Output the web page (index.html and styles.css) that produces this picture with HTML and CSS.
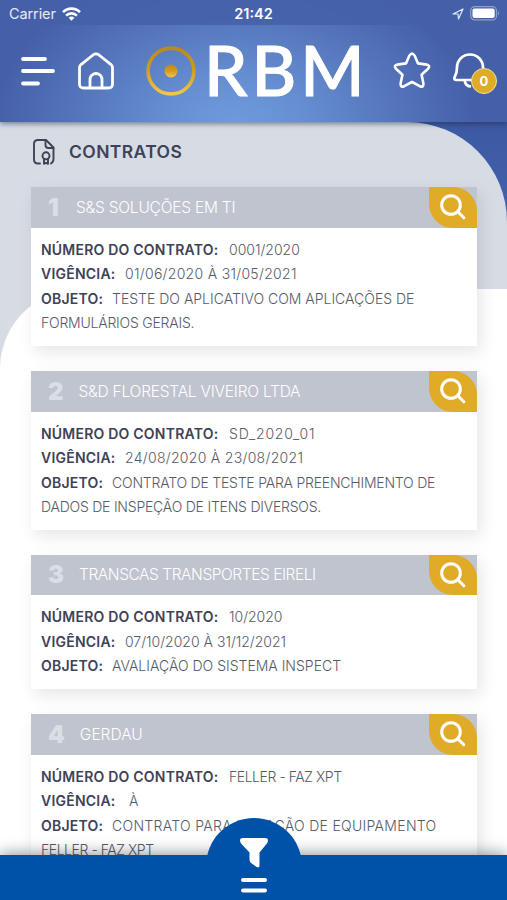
FILE: index.html
```html
<!doctype html>
<html lang="pt-BR">

<head>
    <meta charset="utf-8">
    <meta name="viewport" content="width=device-width, initial-scale=1">
    <title>Contratos</title>
    <link rel="stylesheet" href="styles.css">
</head>

<body>
<div class="app">
    <header class="header">
        <div class="status">
            <div class="carrier">
                <span>Carrier</span>
                <svg width="19" height="14" viewBox="0 0 19 14" fill="none" stroke="#fff" stroke-width="2.6">
                    <path d="M1 5.200a12 12 0 0 1 17 0M4.100 8.600a7.600 7.600 0 0 1 10.800 0"/>
                    <path d="M6.600 10.800a4.200 4.200 0 0 1 5.800 0l-2.900 3z" fill="#fff" stroke="none"/>
                </svg>
            </div>
            <div class="clock">21:42</div>
            <div class="battery">
                <svg width="12" height="12" viewBox="0 0 12 12" fill="none" stroke="#e3e8f5" stroke-width="1.200" stroke-linejoin="round">
                    <path d="M1 6l10-5-4.500 10-.5-5z"/>
                </svg>
                <svg width="30" height="15" viewBox="0 0 30 15">
                    <rect x=".7" y=".7" width="25.800" height="13.200" rx="4" fill="none" stroke="#8fa0ce" stroke-width="1.200"/>
                    <rect x="2.500" y="2.500" width="22.200" height="9.600" rx="2" fill="#fff"/>
                    <path d="M28 5v4.500q2-2.200 0-4.500" fill="#8fa0ce"/>
                </svg>
            </div>
        </div>
        <nav class="nav">
            <svg class="menu" width="36" height="32" viewBox="0 0 36 32" stroke="#fff" stroke-width="3.800" stroke-linecap="round">
                <path d="M4 4h22M4 16h30M4 28.500h15"/>
            </svg>
            <svg class="home" width="38" height="38" viewBox="0 0 38 38" fill="none" stroke="#fff" stroke-width="2.800" stroke-linejoin="round">
                <path d="M2.500 15.500Q2.500 14 4 12.600L16 3q3-2.200 6 0l12 9.600q1.500 1.400 1.500 3V32q0 4-4 4h-25q-4 0-4-4z"/>
                <path d="M13 36v-8.500a6 6 0 0 1 12 0V36"/>
            </svg>
            <div class="logo">
                <svg width="50" height="50" viewBox="0 0 50 50">
                    <defs>
                        <linearGradient id="gold" x1="0" y1="0" x2="0" y2="1">
                            <stop offset="0" stop-color="#b98a1c"/>
                            <stop offset=".5" stop-color="#d39d1c"/>
                            <stop offset="1" stop-color="#f0c64c"/>
                        </linearGradient>
                    </defs>
                    <circle cx="25" cy="25" r="22.900" fill="none" stroke="url(#gold)" stroke-width="3.600"/>
                    <circle cx="25" cy="25" r="6.500" fill="url(#gold)"/>
                </svg>
                <span class="logo-text">RBM</span>
            </div>
            <svg class="star" width="38" height="37" viewBox="0 0 38 37" fill="none" stroke="#fff" stroke-width="2.600" stroke-linejoin="round">
                <path d="M16.400 3.600q2.600-4 5.200 0l3.400 7.800 8.600 1.200q4.200 1 1.400 4.200l-6.400 6 1.800 8.800q.2 4.200-3.600 2.600L19 30l-7.800 4.200q-3.800 1.600-3.600-2.600l1.800-8.800-6.400-6q-2.800-3.200 1.400-4.200l8.600-1.200z"/>
            </svg>
            <div class="bell">
                <svg width="34" height="38" viewBox="0 0 34 38" fill="none" stroke="#fff" stroke-width="2.700" stroke-linejoin="round">
                    <path d="M4 15.500a13 13 0 0 1 26 0c0 6 3 9 3 12.500H3.500q-3 0-1.800-3C3.500 22 4 20 4 15.500z"/>
                    <path d="M11.500 28q1 6.500 6.500 6.500"/>
                </svg>
                <span class="badge">0</span>
            </div>
        </nav>
    </header>

    <main class="main">
        <div class="title">
            <svg width="22" height="26" viewBox="0 0 22 26" fill="none" stroke="#3d4353" stroke-width="1.900" stroke-linecap="round" stroke-linejoin="round">
                <path d="M7 24.500H5q-4 0-4-4V5q0-4 4-4h8l7.500 7.500V20q0 3-2.500 4.500"/>
                <path d="M12.500 1v5q0 3 3 3h5"/>
                <circle cx="13" cy="16.800" r="3.500"/>
                <path d="M11 20v4.800l2-1 2 1V20"/>
            </svg>
            <h1>CONTRATOS</h1>
        </div>

        <section class="card">
            <div class="card-head">
                <span class="index">1</span>
                <span class="name tight">S&amp;S SOLUÇÕES EM TI</span>
                <span class="search"><svg width="26" height="26" viewBox="0 0 26 26"><circle cx="11" cy="11" r="9.300"/><path d="M17.800 17.800l6 6"/></svg></span>
            </div>
            <div class="card-body">
                <p><b class="numero">NÚMERO DO CONTRATO:</b><span>0001/2020</span></p>
                <p><b class="vigencia">VIGÊNCIA:</b><span class="wide">01/06/2020 À 31/05/2021</span></p>
                <p><b class="objeto">OBJETO:</b><span>TESTE DO APLICATIVO COM APLICAÇÕES DE<br><span class="tight">FORMULÁRIOS GERAIS.</span></span></p>
            </div>
        </section>

        <section class="card">
            <div class="card-head">
                <span class="index">2</span>
                <span class="name tight">S&amp;D FLORESTAL VIVEIRO LTDA</span>
                <span class="search"><svg width="26" height="26" viewBox="0 0 26 26"><circle cx="11" cy="11" r="9.300"/><path d="M17.800 17.800l6 6"/></svg></span>
            </div>
            <div class="card-body">
                <p><b class="numero">NÚMERO DO CONTRATO:</b><span class="wider">SD_2020_01</span></p>
                <p><b class="vigencia">VIGÊNCIA:</b><span class="wide">24/08/2020 À 23/08/2021</span></p>
                <p><b class="objeto">OBJETO:</b><span class="tight">CONTRATO DE TESTE PARA PREENCHIMENTO DE<br>DADOS DE INSPEÇÃO DE ITENS DIVERSOS.</span></p>
            </div>
        </section>

        <section class="card">
            <div class="card-head">
                <span class="index">3</span>
                <span class="name tighter">TRANSCAS TRANSPORTES EIRELI</span>
                <span class="search"><svg width="26" height="26" viewBox="0 0 26 26"><circle cx="11" cy="11" r="9.300"/><path d="M17.800 17.800l6 6"/></svg></span>
            </div>
            <div class="card-body">
                <p><b class="numero">NÚMERO DO CONTRATO:</b><span>10/2020</span></p>
                <p><b class="vigencia">VIGÊNCIA:</b><span>07/10/2020 À 31/12/2021</span></p>
                <p><b class="objeto">OBJETO:</b><span>AVALIAÇÃO DO SISTEMA INSPECT</span></p>
            </div>
        </section>

        <section class="card">
            <div class="card-head">
                <span class="index">4</span>
                <span class="name">GERDAU</span>
                <span class="search"><svg width="26" height="26" viewBox="0 0 26 26"><circle cx="11" cy="11" r="9.300"/><path d="M17.800 17.800l6 6"/></svg></span>
            </div>
            <div class="card-body">
                <p><b class="numero">NÚMERO DO CONTRATO:</b><span class="tighter">FELLER - FAZ XPT</span></p>
                <p><b class="vigencia">VIGÊNCIA:</b><span>&nbsp;À</span></p>
                <p><b class="objeto">OBJETO:</b><span class="wide">CONTRATO PARA LOCAÇÃO DE EQUIPAMENTO<br><span class="tighter">FELLER - FAZ XPT</span></span></p>
            </div>
        </section>
    </main>

    <footer class="footer">
        <div class="filter">
            <svg width="34" height="56" viewBox="0 0 34 56" fill="#fff">
                <path d="M6 0h22q3.500 0 2.800 3.500-.3 1.500-1.500 2.800L22.500 14.500v13q0 3-2.800 1.600l-5-3.500q-2.200-1.300-2.200-3.500v-7.600L4.700 6.300Q3.500 5 3.200 3.500 2.500 0 6 0z"/>
                <rect x="4" y="40" width="26" height="4" rx="2"/>
                <rect x="4" y="50.500" width="26" height="4" rx="2"/>
            </svg>
        </div>
    </footer>
</div>
</body>

</html>
```
FILE: styles.css
```css
* {
    box-sizing: border-box;
}

body {
    margin: 0;
    font-family: Inter, "Open Sans", sans-serif;
    color: #3d4258;
}

svg {
    display: block;
    flex: none;
}

.app {
    position: relative;
    display: flex;
    flex-direction: column;
    width: 507px;
    height: 900px;
    overflow: hidden;
    background: linear-gradient(#3c59a3 122px, #4763ae 250px, #fff 251px);
}

/* top bar */
.header {
    position: relative;
    z-index: 2;
    flex: none;
    height: 122px;
    background: radial-gradient(ellipse 240px 165px at 235px 125px, #6e9bdc 0%, #668fd1 28%, #5474b9 68%, #4560a8 100%);
    box-shadow: 0 2px 5px rgba(30, 40, 60, .5);
}

.status {
    display: grid;
    grid-template-columns: 1fr auto 1fr;
    align-items: center;
    height: 25px;
    padding: 2px 9px 0 9px;
    color: #fff;
    background: rgba(69, 96, 168, .9);
}

.carrier,
.battery {
    display: flex;
    align-items: center;
    gap: 6px;
}

.carrier {
    color: #e6ebf7;
    font-size: 14.500px;
    letter-spacing: -.1px;
}

.battery {
    justify-content: flex-end;
}

.battery svg:last-child {
    margin-right: -2px;
}

.clock {
    font-weight: 600;
    font-size: 14.500px;
}

.nav {
    display: flex;
    align-items: center;
    height: 91px;
    padding-left: 19px;
}

.home {
    margin-left: 22px;
}

.logo {
    display: flex;
    align-items: center;
    width: 216px;
    margin-left: 31px;
}

.logo-text {
    margin: -2px 0 0 8px;
    font-family: Lato, sans-serif;
    font-size: 69px;
    font-weight: 500;
    letter-spacing: 4px;
    line-height: 80px;
    color: #fff;
    -webkit-text-stroke: 1px #fff;
}

.star {
    margin-left: 31px;
}

.bell {
    position: relative;
    margin-left: 22px;
}

.badge {
    position: absolute;
    left: 18px;
    top: 16px;
    width: 26px;
    height: 26px;
    border: 1px solid #f3dfa4;
    border-radius: 50%;
    background: #e0ac27;
    color: #fff;
    font-size: 13px;
    font-weight: 700;
    line-height: 24px;
    text-align: center;
}

/* content */
.main {
    position: relative;
    flex: 1;
    padding: 14px 30px 0 31px;
    background: linear-gradient(#d7dce4, #d7dce4) 0 0 / 100% 167px no-repeat, #fff;
    border-top-right-radius: 100px;
}

/* white rounded sheet under the cards */
.main::before {
    content: "";
    position: absolute;
    left: 0;
    right: 0;
    top: 167px;
    bottom: 0;
    background: radial-gradient(circle at 80px 80px, #fff 79.500px, #d7dce4 80.500px) 0 0 / 80px 80px no-repeat;
}

.title {
    display: flex;
    align-items: center;
    gap: 14px;
    height: 31px;
    padding-left: 2px;
    margin-bottom: 20px;
}

h1 {
    margin: 0;
    font-size: 17.500px;
    font-weight: 600;
    letter-spacing: .4px;
}

.card {
    position: relative;
    margin-bottom: 25px;
    background: #fff;
    box-shadow: 4px 6px 16px rgba(0, 0, 0, .1);
}

.card-head {
    display: flex;
    align-items: center;
    height: 40.800px;
    padding-left: 17px;
    background: #bfc4ce;
    color: #fff;
}

.index {
    min-width: 13px;
    color: #d9dee7;
    font-size: 24px;
    font-weight: 900;
}

.name {
    margin-left: 15px;
    font-size: 15.500px;
    font-weight: 300;
    white-space: nowrap;
}

.search {
    display: flex;
    align-items: center;
    justify-content: center;
    width: 48px;
    height: 100%;
    margin-left: auto;
    border-radius: 0 24px 0 24px;
    background: #e0ac27;
}

.search svg {
    fill: none;
    stroke: #fff;
    stroke-width: 3px;
    stroke-linecap: round;
}

.card-body {
    padding: 10px 0 10px 10px;
    font-size: 14px;
    line-height: 24.500px;
}

.card-body p {
    margin: 0;
    white-space: nowrap;
}

.card-body b {
    display: inline-block;
    font-weight: 600;
    letter-spacing: .22px;
}

.card-body span {
    color: #555a68;
    font-weight: 300;
}

.wide {
    letter-spacing: .3px;
}

.wider {
    letter-spacing: .8px;
}

.tight {
    letter-spacing: -.22px;
}

.tighter {
    letter-spacing: -.45px;
}

.numero {
    width: 188px;
}

.vigencia {
    width: 84px;
}

.objeto {
    width: 71px;
}

/* bottom bar */
.footer {
    position: absolute;
    z-index: 3;
    left: 0;
    right: 0;
    bottom: 0;
    display: flex;
    justify-content: center;
    height: 45px;
    background: #0051a8;
    box-shadow: 0 -2px 14px rgba(0, 0, 0, .4);
}

.filter {
    display: flex;
    justify-content: center;
    width: 96px;
    height: 96px;
    margin-top: -37px;
    padding-top: 20px;
    border-radius: 50%;
    background: #0051a8;
}
```
